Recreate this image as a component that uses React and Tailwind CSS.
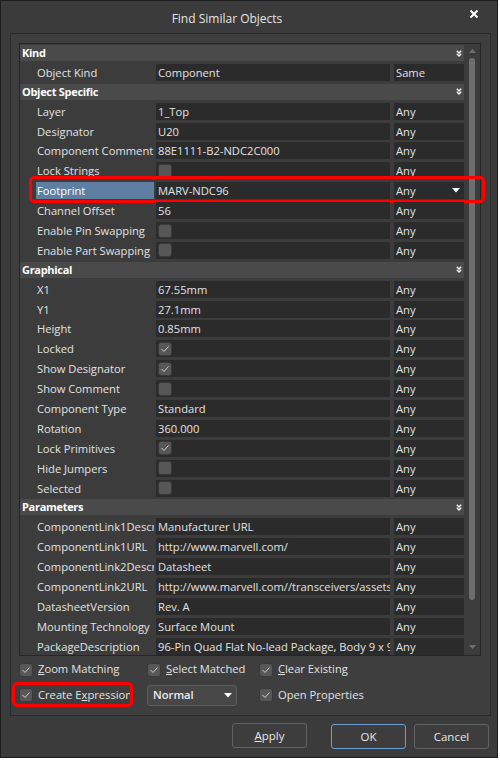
import React from 'react';

const sections = [
  { title: 'Kind', rows: [{ label: 'Object Kind', value: 'Component', match: 'Same' }] },
  {
    title: 'Object Specific',
    rows: [
      { label: 'Layer', value: '1_Top' },
      { label: 'Designator', value: 'U20' },
      { label: 'Component Comment', value: '88E1111-B2-NDC2C000' },
      { label: 'Lock Strings', check: false },
      { label: 'Footprint', value: 'MARV-NDC96', selected: true },
      { label: 'Channel Offset', value: '56' },
      { label: 'Enable Pin Swapping', check: false },
      { label: 'Enable Part Swapping', check: false },
    ],
  },
  {
    title: 'Graphical',
    rows: [
      { label: 'X1', value: '67.55mm' },
      { label: 'Y1', value: '27.1mm' },
      { label: 'Height', value: '0.85mm' },
      { label: 'Locked', check: true },
      { label: 'Show Designator', check: true },
      { label: 'Show Comment', check: false },
      { label: 'Component Type', value: 'Standard' },
      { label: 'Rotation', value: '360.000' },
      { label: 'Lock Primitives', check: true },
      { label: 'Hide Jumpers', check: false },
      { label: 'Selected', check: false },
    ],
  },
  {
    title: 'Parameters',
    rows: [
      { label: 'ComponentLink1Description', value: 'Manufacturer URL' },
      { label: 'ComponentLink1URL', value: 'http://www.marvell.com/' },
      { label: 'ComponentLink2Description', value: 'Datasheet' },
      { label: 'ComponentLink2URL', value: 'http://www.marvell.com//transceivers/assets/Marvell-88E1111.pdf' },
      { label: 'DatasheetVersion', value: 'Rev. A' },
      { label: 'Mounting Technology', value: 'Surface Mount' },
      { label: 'PackageDescription', value: '96-Pin Quad Flat No-lead Package, Body 9 x 9 mm' },
    ],
  },
]

const Check = ({ checked }) => (
  <span className="flex h-[14px] w-[14px] shrink-0 items-center justify-center rounded-[3px] border border-[#3a3a3a] bg-[#575757]">
    {checked && (
      <svg width="10" height="8" viewBox="0 0 10 8">
        <path d="M1.5 4 L4 6.5 L8.5 1.5" fill="none" stroke="#cfcfcf" strokeWidth="1" />
      </svg>
    )}
  </span>
)

const Chevrons = () => (
  <svg width="6" height="7" viewBox="0 0 6 7">
    <path d="M0.8 0.8 L3 3 L5.2 0.8 M0.8 3.8 L3 6 L5.2 3.8" fill="none" stroke="#ffffff" strokeWidth="1.3" />
  </svg>
)

const Row = ({ row }) => (
  <div className="relative flex h-[17px] text-[11.2px] leading-[17px] text-[#e2e2e2]">
    <div className="w-[136px] shrink-0 pl-[16px] pr-[2px]">
      {row.selected ? (
        <div className="h-full overflow-hidden whitespace-nowrap bg-[#5e7fa2] pl-[1px] text-white">{row.label}</div>
      ) : (
        <div className="h-full overflow-hidden whitespace-nowrap pl-[1px]">{row.label}</div>
      )}
    </div>
    <div className="flex w-[234px] shrink-0 items-center overflow-hidden whitespace-nowrap bg-[#2b2b2b] pl-[2px]">
      {row.check === undefined ? row.value : <Check checked={row.check} />}
    </div>
    <div className="ml-[4px] flex w-[70px] shrink-0 items-center justify-between bg-[#2b2b2b] pl-[2px] pr-[4px]">
      <span>{row.match || 'Any'}</span>
      {row.selected && (
        <svg width="8" height="5" viewBox="0 0 8 5">
          <path d="M0 0 H8 L4 4.5 Z" fill="#ffffff" />
        </svg>
      )}
    </div>
    {row.selected && (
      <div className="pointer-events-none absolute left-[9px] top-[-6px] h-[27px] w-[456px] rounded-[5px] border-[3px] border-[#ff0000]" />
    )}
  </div>
)

const Option = ({ checked = true, children }) => (
  <div className="flex items-center gap-[5px]">
    <Check checked={checked} />
    <span className="whitespace-nowrap">{children}</span>
  </div>
)

const Button = ({ children, primary }) => (
  <button
    className={
      primary
        ? 'h-[25px] w-[75px] rounded-[3px] border border-[#6f9fd2] bg-[#3d3d3d] text-[11.5px] text-[#e6e6e6]'
        : 'h-[25px] w-[75px] rounded-[3px] border border-[#626262] bg-[#3d3d3d] text-[11.5px] text-[#e6e6e6]'
    }
  >
    {children}
  </button>
)

export default function App() {
  return (
    <div className="h-[760px] w-[500px] bg-white font-['Open_Sans','Noto_Sans',sans-serif]">
      <div className="flex h-[758px] w-[498px] flex-col border border-[#1e1e1e] bg-[#3b3b3b]">
        {/* title bar */}
        <div className="flex h-[32px] shrink-0">
          <div className="flex flex-1 items-center justify-center pt-[4px] text-[12px] text-[#e4e4e4]">
            Find Similar Objects
          </div>
          <div className="flex w-[44px] items-start justify-center pt-[8px] pr-[2px]">
            <svg width="10" height="10" viewBox="0 0 10 10">
              <path d="M1.5 1.5 L8.5 8.5 M8.5 1.5 L1.5 8.5" stroke="#ffffff" strokeWidth="2" />
            </svg>
          </div>
        </div>

        {/* group box */}
        <div className="ml-[9px] w-[481px] border border-[#2a2a2a] bg-[#3e3e3e] pb-[9px] pl-[8px] pt-[9px]">
          <div className="flex h-[613px] w-[462px] border border-[#262626] bg-[#3c3c3c]">
            <div className="flex w-[444px] flex-col gap-[2.9px] pt-[1px]">
              {sections.map((s) => (
                <React.Fragment key={s.title}>
                  <div className="flex h-[16px] shrink-0 items-center justify-between bg-[#4a4a4a] pl-[2px] pr-[2px] text-[11px] font-bold leading-[16px] tracking-[-0.3px] text-white">
                    <span>{s.title}</span>
                    <Chevrons />
                  </div>
                  {s.rows.map((r) => (
                    <Row key={r.label} row={r} />
                  ))}
                </React.Fragment>
              ))}
            </div>
            {/* scrollbar */}
            <div className="flex w-[16px] flex-col items-center pt-[5px] pb-[6px]">
              <svg width="7" height="4" viewBox="0 0 7 4">
                <path d="M0 4 L3.5 0 L7 4 Z" fill="#6e6e6e" />
              </svg>
              <div className="mt-[5px] h-[542px] w-[6px] rounded-full bg-[#6e6e6e]" />
              <div className="flex-1" />
              <svg width="7" height="4" viewBox="0 0 7 4">
                <path d="M0 0 H7 L3.5 4 Z" fill="#6e6e6e" />
              </svg>
            </div>
          </div>

          {/* options */}
          <div className="mt-[6px] grid grid-cols-[128px_112px_1fr] gap-y-[8px] text-[11.2px] text-[#e2e2e2]">
            <div className="flex h-[15px] items-center">
              <Option>
                <span className="underline">Z</span>oom Matching
              </Option>
            </div>
            <div className="flex h-[15px] items-center">
              <Option>
                <span className="underline">S</span>elect Matched
              </Option>
            </div>
            <div className="flex h-[15px] items-center">
              <Option>
                <span className="underline">C</span>lear Existing
              </Option>
            </div>
            <div className="relative flex h-[21px] items-center">
              <Option>
                Create E<span className="underline">x</span>pression
              </Option>
              <div className="pointer-events-none absolute left-[-7px] top-[-3px] h-[25px] w-[121px] rounded-[5px] border-[3px] border-[#ff0000]" />
            </div>
            <div className="flex h-[21px] items-center">
              <div className="flex h-[21px] w-[90px] items-center justify-between rounded-[3px] border border-[#5c5c5c] bg-[#474747] pl-[5px] pr-[4px] font-semibold text-[#ececec]">
                <span>Normal</span>
                <svg width="8" height="5" viewBox="0 0 8 5">
                  <path d="M0 0 H8 L4 4.5 Z" fill="#ffffff" />
                </svg>
              </div>
            </div>
            <div className="flex h-[21px] items-center">
              <Option>
                Open P<span className="underline">r</span>operties
              </Option>
            </div>
          </div>
        </div>

        {/* buttons */}
        <div className="mt-[7px] flex justify-end pr-[8px]">
          <Button>
            <span className="underline">A</span>pply
          </Button>
          <div className="ml-[24px]">
            <Button primary>OK</Button>
          </div>
          <div className="ml-[8px]">
            <Button>Cancel</Button>
          </div>
        </div>
      </div>
    </div>
  )
}
